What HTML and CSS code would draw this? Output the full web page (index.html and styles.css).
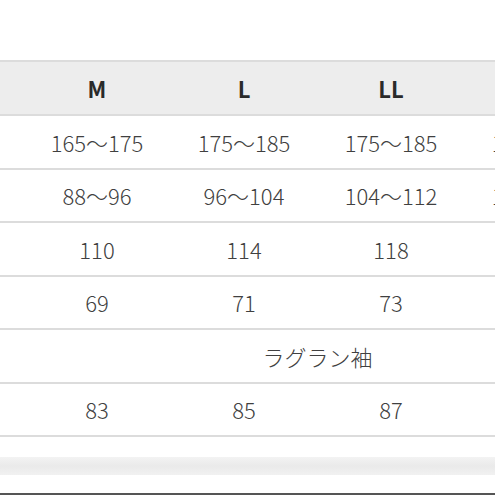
FILE: index.html
```html
<!DOCTYPE html>
<html lang="ja">
<head>
<meta charset="utf-8">
<link rel="stylesheet" href="styles.css">
</head>
<body>
<div class="sheet">
  <div class="table">
    <div class="row head">
      <div class="cell"></div>
      <div class="cell">M</div>
      <div class="cell">L</div>
      <div class="cell">LL</div>
      <div class="cell">3L</div>
    </div>
    <div class="row">
      <div class="cell"></div>
      <div class="cell">165〜175</div>
      <div class="cell">175〜185</div>
      <div class="cell">175〜185</div>
      <div class="cell">175〜185</div>
    </div>
    <div class="row">
      <div class="cell"></div>
      <div class="cell">88〜96</div>
      <div class="cell">96〜104</div>
      <div class="cell">104〜112</div>
      <div class="cell">112〜120</div>
    </div>
    <div class="row">
      <div class="cell"></div>
      <div class="cell">110</div>
      <div class="cell">114</div>
      <div class="cell">118</div>
      <div class="cell">122</div>
    </div>
    <div class="row">
      <div class="cell"></div>
      <div class="cell">69</div>
      <div class="cell">71</div>
      <div class="cell">73</div>
      <div class="cell">75</div>
    </div>
    <div class="row">
      <div class="cell"></div>
      <div class="cell span4">ラグラン袖</div>
    </div>
    <div class="row">
      <div class="cell"></div>
      <div class="cell">83</div>
      <div class="cell">85</div>
      <div class="cell">87</div>
      <div class="cell">89</div>
    </div>
  </div>
  <div class="band"></div>
  <div class="rule"></div>
</div>
</body>
</html>
```
FILE: styles.css
```css
html, body {
  margin: 0;
  padding: 0;
  background: #ffffff;
  overflow: hidden;
}
.sheet {
  width: 495px;
  height: 495px;
  overflow: hidden;
  padding-top: 60px;
  box-sizing: border-box;
  font-family: "Noto Sans CJK JP", "Noto Sans", sans-serif;
  color: #404040;
}
.table {
  margin-left: -123.5px;
  width: 735px;
  border-top: 2px solid #dcdcdc;
}
.row {
  display: grid;
  grid-template-columns: repeat(5, 147px);
  align-items: center;
  height: 53.5px;
  box-sizing: border-box;
  border-bottom: 2px solid #dcdcdc;
  font-size: 22px;
  font-weight: 300;
  line-height: 1;
}
.row.head {
  height: 54px;
  background: #ededed;
  font-weight: 700;
  color: #2a2a2a;
}
.cell {
  text-align: center;
  white-space: nowrap;
}
.span4 {
  grid-column: 2 / span 4;
}
.band {
  margin-top: 20px;
  height: 18px;
  width: 495px;
  background: linear-gradient(#f3f3f3, #eaeaea 50%, #f1f1f1);
}
.rule {
  margin-top: 18px;
  height: 2px;
  width: 495px;
  background: #555555;
}
```
